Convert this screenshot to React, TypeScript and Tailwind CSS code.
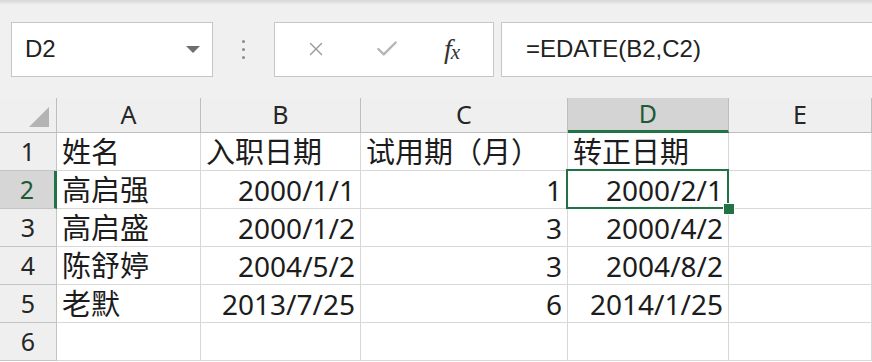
import { X, Check } from 'lucide-react'

const COLS = ['A', 'B', 'C', 'D', 'E']

const ROWS: { cells: string[]; align: ('l' | 'r')[] }[] = [
  { cells: ['姓名', '入职日期', '试用期（月）', '转正日期', ''], align: ['l', 'l', 'l', 'l', 'l'] },
  { cells: ['高启强', '2000/1/1', '1', '2000/2/1', ''], align: ['l', 'r', 'r', 'r', 'l'] },
  { cells: ['高启盛', '2000/1/2', '3', '2000/4/2', ''], align: ['l', 'r', 'r', 'r', 'l'] },
  { cells: ['陈舒婷', '2004/5/2', '3', '2004/8/2', ''], align: ['l', 'r', 'r', 'r', 'l'] },
  { cells: ['老默', '2013/7/25', '6', '2014/1/25', ''], align: ['l', 'r', 'r', 'r', 'l'] },
  { cells: ['', '', '', '', ''], align: ['l', 'l', 'l', 'l', 'l'] },
]

const isCjk = (s: string) => /[\u4e00-\u9fff]/.test(s)

function FormulaBar() {
  return (
    <div className="h-[98px] flex items-center pl-[11px] bg-[linear-gradient(#d6d6d6,#f0f0f0_5px,#f0f0f0)]">
      {/* name box */}
      <div className="w-[202px] h-[55px] bg-white border border-[#c6c6c6] flex items-center justify-between pl-[13px] pr-[12px]">
        <span className="text-[24px] text-[#222] font-['Liberation_Sans',sans-serif]">D2</span>
        <span className="w-0 h-0 border-l-[7px] border-r-[7px] border-t-[7px] border-l-transparent border-r-transparent border-t-[#6e6e6e]" />
      </div>
      <div className="w-[61px] flex flex-col items-center gap-[5px]">
        <span className="w-[3px] h-[3px] rounded-full bg-[#8a8a8a]" />
        <span className="w-[3px] h-[3px] rounded-full bg-[#8a8a8a]" />
        <span className="w-[3px] h-[3px] rounded-full bg-[#8a8a8a]" />
      </div>
      {/* buttons */}
      <div className="w-[220px] h-[55px] bg-white border border-[#c6c6c6] flex items-center pl-[30px]">
        <X className="w-[22px] h-[22px] text-[#9c9c9c]" strokeWidth={1.5} />
        <Check className="ml-[47px] w-[26px] h-[26px] text-[#b5b5b5]" strokeWidth={2.2} />
        <span className="ml-[44px] text-[28px] italic text-[#333] font-['Liberation_Serif',serif] leading-none">
          f<span className="text-[21px] relative top-[1px] -ml-[1px]">x</span>
        </span>
      </div>
      {/* formula */}
      <div className="flex-1 h-[55px] ml-[7px] -mr-[2px] bg-white border border-[#c6c6c6] flex items-center pl-[24px]">
        <span className="text-[24px] text-[#222] font-['Liberation_Sans',sans-serif]">=EDATE(B2,C2)</span>
      </div>
    </div>
  )
}

export default function App() {
  return (
    <div className="w-[872px] h-[362px] overflow-hidden bg-white font-['Noto_Sans','Noto_Sans_CJK_SC',sans-serif]">
      <FormulaBar />
      <div className="grid grid-cols-[57px_144px_160px_207px_161px_1fr]">
        {/* column headers */}
        <div className="h-[35px] bg-[#efefef] border-r border-b border-[#bdbdbd] flex items-end justify-end pr-[7px] pb-[5px]">
          <span className="w-0 h-0 border-l-[20px] border-b-[20px] border-l-transparent border-b-[#b4b4b4]" />
        </div>
        {COLS.map(c => (
          <div
            key={c}
            className={
              c === 'D'
                ? 'h-[35px] bg-[#d4d4d4] border-r border-[#bdbdbd] border-b-[3px] border-b-[#217346] flex items-center justify-center text-[25px] text-[#1f5a37]'
                : 'h-[35px] bg-[#efefef] border-r border-b border-[#bdbdbd] flex items-center justify-center text-[25px] text-[#262626]'
            }
          >
            {c}
          </div>
        ))}
        {ROWS.map((row, r) => (
          <Row key={r} index={r + 1} cells={row.cells} align={row.align} />
        ))}
      </div>
    </div>
  )
}

function Row({ index, cells, align }: { index: number; cells: string[]; align: ('l' | 'r')[] }) {
  const active = index === 2
  return (
    <>
      <div
        className={
          active
            ? 'h-[38px] bg-[#d6d6d6] border-b border-[#c4c4c4] border-r-[3px] border-r-[#217346] flex items-center justify-center text-[25px] text-[#1f5a37]'
            : 'h-[38px] bg-[#efefef] border-b border-r border-[#c4c4c4] flex items-center justify-center text-[25px] text-[#262626]'
        }
      >
        {index}
      </div>
      {cells.map((v, i) => (
        <div
          key={i}
          className={`relative h-[38px] border-r border-b border-[#d8d8d8] flex items-center leading-none text-[#1c1c1c] whitespace-nowrap ${
            isCjk(v) ? 'text-[29px]' : 'text-[28px]'
          } ${align[i] === 'r' ? 'justify-end pr-[5px]' : 'justify-start pl-[5px]'}`}
        >
          {v}
          {active && i === 3 && (
            <>
              <span className="absolute z-10 -left-[2px] -top-[2px] -right-[1px] -bottom-[1px] border-2 border-[#217346]" />
              <span className="absolute z-20 -right-[6px] -bottom-[6px] w-[10px] h-[10px] bg-[#217346] outline outline-1 outline-white" />
            </>
          )}
        </div>
      ))}
    </>
  )
}
